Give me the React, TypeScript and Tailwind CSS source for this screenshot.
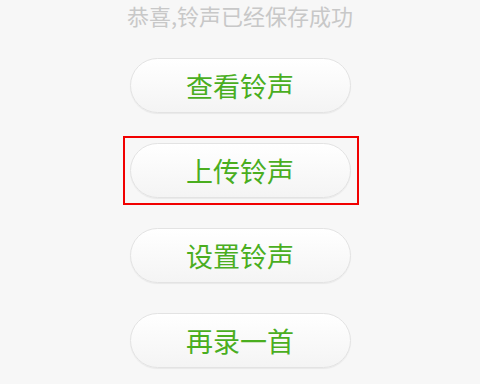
const actions = ['查看铃声', '上传铃声', '设置铃声', '再录一首'];

function RingButton({ label, marked }: { label: string; marked?: boolean }) {
  return (
    <div className="relative">
      {marked && (
        <span className="pointer-events-none absolute -left-[7px] -right-[8px] -top-[7px] -bottom-[7px] border-2 border-[#f10000]"></span>
      )}
      <button className="flex h-[55px] w-[221px] items-center justify-center rounded-full border border-[#e3e3e3] bg-gradient-to-b from-white to-[#f4f4f4] text-[27px] leading-none text-[#4aae1f] shadow-[0_1px_1px_rgba(0,0,0,0.06)]">
        {label}
      </button>
    </div>
  );
}

export default function App() {
  return (
    <div
      className="flex h-[384px] w-[480px] flex-col items-center overflow-hidden bg-[#f7f7f7]"
      style={{ fontFamily: '"Noto Sans CJK SC", "Noto Sans", sans-serif' }}
    >
      <p className="mt-[2px] text-[22px] leading-[26px] text-[#c8c8c8]">
        恭喜,铃声已经保存成功
      </p>
      <div className="mt-[30px] flex flex-col items-center gap-[30px]">
        {actions.map((a) => (
          <RingButton key={a} label={a} marked={a === '上传铃声'} />
        ))}
      </div>
    </div>
  );
}
